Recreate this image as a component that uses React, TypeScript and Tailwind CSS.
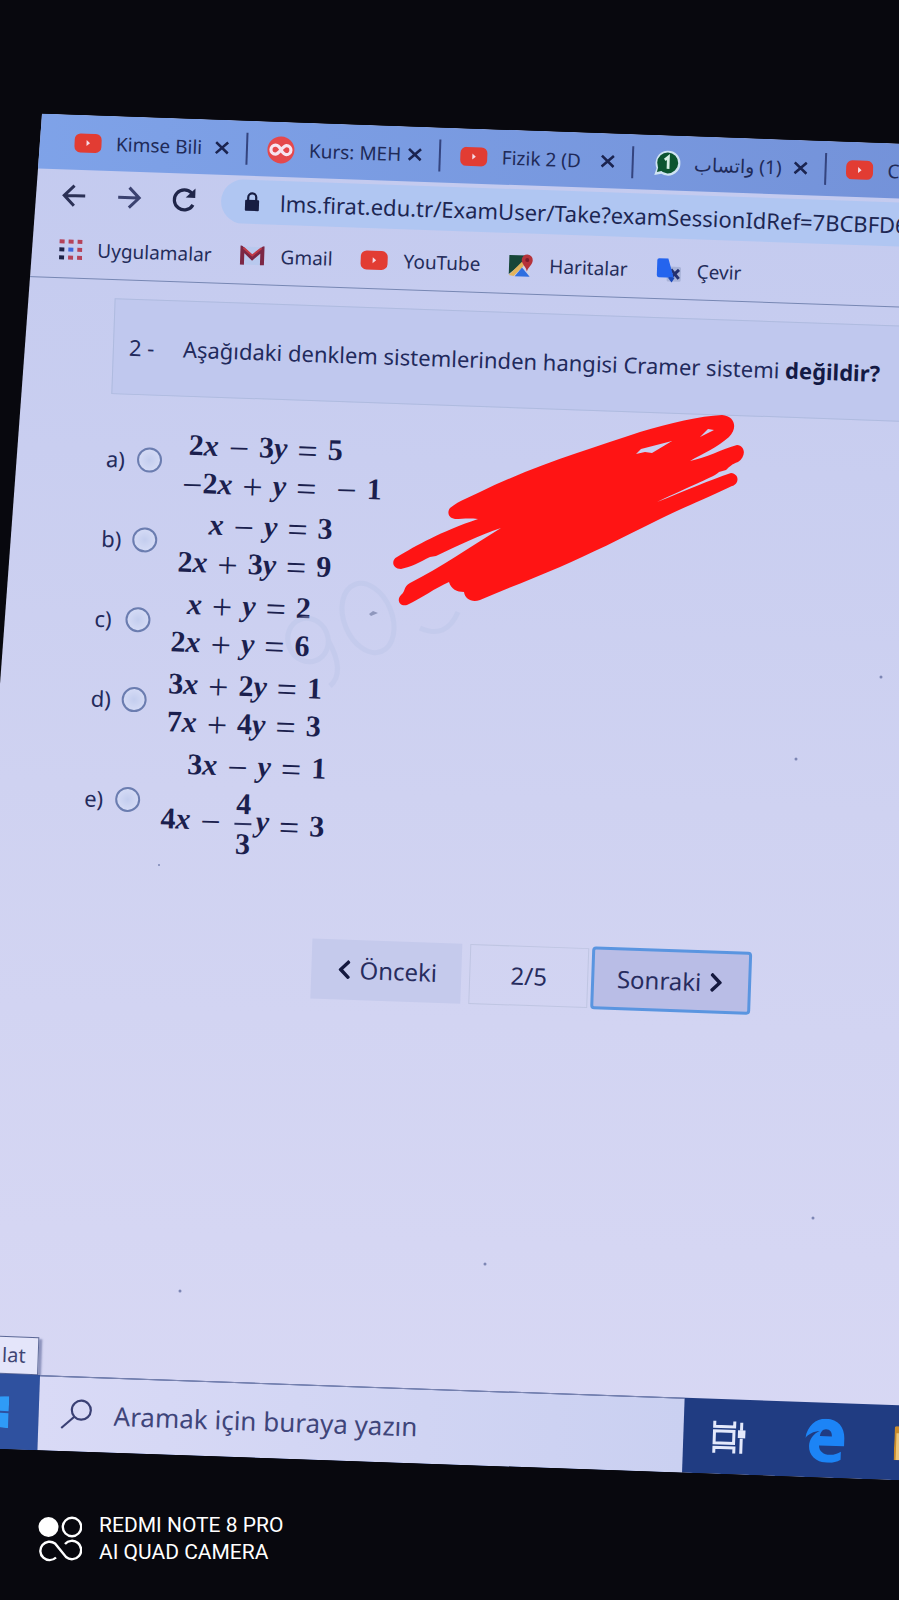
import type { ReactNode } from "react";
import { FaChevronLeft, FaChevronRight } from "react-icons/fa";

function YouTubeIcon() {
  return (
    <svg viewBox="0 0 28 20" className="h-5 w-7 shrink-0" aria-hidden="true">
      <rect x="0.5" y="0.5" width="27" height="19" rx="6" fill="#e23c33" />
      <path d="M12.5 7 L16 10 L12.5 13 Z" fill="#f6dce6" />
    </svg>
  );
}

function CourseIcon() {
  return (
    <svg viewBox="0 0 28 28" className="h-7 w-7 shrink-0" aria-hidden="true">
      <circle cx="14" cy="14" r="13.500" fill="#e5484c" />
      <path
        d="M14 14 C12 10 10.500 9.500 8.500 9.500 A4.500 4.500 0 0 0 8.500 18.500 C12.500 18.500 15.500 9.500 19.500 9.500 A4.500 4.500 0 0 1 19.500 18.500 C17 18.500 16 17 14 14"
        fill="none"
        stroke="#f7e4f0"
        strokeWidth="3.200"
      />
    </svg>
  );
}

function WhatsAppIcon() {
  return (
    <svg viewBox="0 0 28 28" className="h-7 w-7 shrink-0" aria-hidden="true">
      <path d="M2 26 L4 19 A12.500 12.500 0 1 1 9 24.500 Z" fill="#cfe3f2" />
      <circle cx="15" cy="13.500" r="10.500" fill="#0c5530" />
      <path d="M4.500 23 L6 17 L10 21.500 Z" fill="#0c5530" />
      <path d="M12 10.500 L15.500 7.500 V19.500" fill="none" stroke="#d6efe4" strokeWidth="2.800" />
    </svg>
  );
}

function CloseIcon() {
  return (
    <svg viewBox="0 0 14 14" className="h-3.5 w-3.5" aria-hidden="true">
      <path d="M1 1.500 L13 12.500 M13 1.500 L1 12.500" stroke="#1b2450" strokeWidth="2.600" />
    </svg>
  );
}

function AppsIcon() {
  const colors = ["#b5425a", "#b5425a", "#b5425a", "#1d2247", "#3f66dd", "#b5425a", "#1d2247", "#b5425a", "#b5425a"];
  return (
    <svg viewBox="0 0 24 24" className="h-6 w-6" aria-hidden="true">
      {colors.map((c, i) => (
        <rect key={i} x={1 + (i % 3) * 9} y={2 + Math.floor(i / 3) * 8} width="5" height="4" fill={c} />
      ))}
    </svg>
  );
}

function GmailIcon() {
  return (
    <svg viewBox="0 0 26 20" className="h-5 w-[26px]" aria-hidden="true">
      <rect x="1" y="1" width="24" height="18" fill="#b9c9ee" />
      <path d="M3 19 V3 L13 12 L23 3 V19" fill="none" stroke="#7c2745" strokeWidth="4" />
      <path d="M4 2 L13 9.500 L22 2" fill="none" stroke="#c03a48" strokeWidth="2" />
    </svg>
  );
}

function MapsIcon() {
  return (
    <svg viewBox="0 0 26 24" className="h-6 w-[26px]" aria-hidden="true">
      <path d="M1 2 H19 L13 11 L1 21 Z" fill="#174638" />
      <path d="M1 22 L14 8 L17 11 L6 23 Z" fill="#e2b45c" />
      <path d="M7 23 L14 14 L22 23 Z" fill="#2f6fe0" />
      <path d="M16 11 L22 16 V22 L15 14 Z" fill="#cfd4e6" />
      <path d="M19 18 C18 13 13.500 11 13.500 6.500 A5.500 5.500 0 0 1 24.500 6.500 C24.500 11 20.500 13 19 18 Z" fill="#b5323a" />
      <circle cx="19" cy="6.500" r="2" fill="#7c1c2b" />
    </svg>
  );
}

function TranslateIcon() {
  return (
    <svg viewBox="0 0 26 26" className="h-[26px] w-[26px]" aria-hidden="true">
      <rect x="11" y="9" width="14" height="15" rx="1.500" fill="#a9b3d8" />
      <path d="M15 12 L23 21 M23 12 L14 21" stroke="#24306f" strokeWidth="3" />
      <path d="M1 3 Q1 1 3 1 H12 L18 20 H3 Q1 20 1 18 Z" fill="#2464ee" />
      <path d="M12 20 H19 L16 25 Z" fill="#1b48b8" />
    </svg>
  );
}

type Tab = { title: string; icon: ReactNode; rtl?: boolean };

const tabs: Tab[] = [
  { title: "Kimse Bili", icon: <YouTubeIcon /> },
  { title: "Kurs: MEH", icon: <CourseIcon /> },
  { title: "Fizik 2 (D", icon: <YouTubeIcon /> },
  { title: "(1) واتساب", icon: <WhatsAppIcon />, rtl: true },
  { title: "C", icon: <YouTubeIcon /> },
];

function TabStrip() {
  return (
    <div className="flex h-[55px] items-center bg-linear-to-r from-[#7fa3e9] to-[#7391d8] pl-[60px]">
      {tabs.map((tab, i) => (
        <div key={i} className="flex h-8 w-[193px] shrink-0 items-center border-r-2 border-[#34447f] pr-[17px] pl-[19px]">
          {tab.icon}
          <span
            dir={tab.rtl ? "rtl" : "ltr"}
            className="ml-3.5 w-[87px] shrink-0 text-[19px] leading-7 whitespace-nowrap text-[#202a58]"
          >
            {tab.title}
          </span>
          <button type="button" aria-label="Kapat" className="ml-auto">
            <CloseIcon />
          </button>
        </div>
      ))}
    </div>
  );
}

function Toolbar() {
  return (
    <div className="flex h-[52px] items-center pl-[68px]">
      <div className="flex items-center gap-[29px]">
        <button type="button" aria-label="Geri">
          <svg viewBox="0 0 26 26" className="h-[26px] w-[26px]" fill="none" stroke="#2b3156" strokeWidth="3">
            <path d="M24 13 H4 M13 3 L3 13 L13 23" />
          </svg>
        </button>
        <button type="button" aria-label="İleri">
          <svg viewBox="0 0 26 26" className="h-[26px] w-[26px]" fill="none" stroke="#3b4270" strokeWidth="3">
            <path d="M2 13 H22 M13 3 L23 13 L13 23" />
          </svg>
        </button>
        <button type="button" aria-label="Yenile">
          <svg viewBox="0 0 26 26" className="h-[26px] w-[26px]" fill="none" stroke="#20264a" strokeWidth="3.200">
            <path d="M22 18 A10 10 0 1 1 20.500 6.500" />
            <path d="M24 1.500 V11 H14.500 Z" fill="#20264a" stroke="none" />
          </svg>
        </button>
      </div>
      <div className="ml-6 flex h-[44px] flex-1 items-center rounded-l-full bg-[#b0c6f2] pl-[23px]">
        <svg viewBox="0 0 16 20" className="h-5 w-4 shrink-0" aria-hidden="true">
          <rect x="1" y="8" width="14" height="11" rx="1" fill="#171d42" />
          <path d="M4 9 V5.500 A4 4 0 0 1 12 5.500 V9" fill="none" stroke="#171d42" strokeWidth="2.200" />
        </svg>
        <input
          aria-label="Adres çubuğu"
          readOnly
          value="lms.firat.edu.tr/ExamUser/Take?examSessionIdRef=7BCBFD6"
          className="ml-5 min-w-0 flex-1 bg-transparent text-[22px] text-[#1d2653] outline-none"
        />
      </div>
    </div>
  );
}

const bookmarks: { label: string; icon: ReactNode }[] = [
  { label: "Uygulamalar", icon: <AppsIcon /> },
  { label: "Gmail", icon: <GmailIcon /> },
  { label: "YouTube", icon: <YouTubeIcon /> },
  { label: "Haritalar", icon: <MapsIcon /> },
  { label: "Çevir", icon: <TranslateIcon /> },
];

function Bookmarks() {
  return (
    <nav className="flex h-[57px] items-center gap-7 border-b border-[#7787b3] pl-[67px]">
      {bookmarks.map((b) => (
        <a key={b.label} href="#" className="flex items-center gap-[15px] text-[19px] text-[#242c5a]">
          {b.icon}
          {b.label}
        </a>
      ))}
    </nav>
  );
}

function Op({ children }: { children: ReactNode }) {
  return (
    <span className="mx-2.5 inline-block align-[-4px] text-[36px] leading-[30px] font-normal not-italic">{children}</span>
  );
}

function V({ children }: { children: ReactNode }) {
  return <i>{children}</i>;
}

function Fraction({ top, bottom }: { top: string; bottom: string }) {
  return (
    <span className="mx-1 inline-flex flex-col text-center align-middle">
      <span className="border-b-2 border-[#2c3160] px-px leading-[38px]">{top}</span>
      <span className="leading-[38px]">{bottom}</span>
    </span>
  );
}

type Equation = { left: ReactNode; right: ReactNode };
type Option = { id: string; row: string; lines: Equation[] };

const options: Option[] = [
  {
    id: "a",
    row: "pl-[122px] h-[79px]",
    lines: [
      { left: <>2<V>x</V><Op>−</Op>3<V>y</V></>, right: "5" },
      {
        left: (
          <>
            <span className="inline-block align-[-4px] text-[36px] leading-[30px] font-normal">−</span>2<V>x</V>
            <Op>+</Op>
            <V>y</V>
          </>
        ),
        right: <><Op>−</Op>1</>,
      },
    ],
  },
  {
    id: "b",
    row: "pl-[120px] h-[80px]",
    lines: [
      { left: <><V>x</V><Op>−</Op><V>y</V></>, right: "3" },
      { left: <>2<V>x</V><Op>+</Op>3<V>y</V></>, right: "9" },
    ],
  },
  {
    id: "c",
    row: "pl-[116px] h-[80px]",
    lines: [
      { left: <><V>x</V><Op>+</Op><V>y</V></>, right: "2" },
      { left: <>2<V>x</V><Op>+</Op><V>y</V></>, right: "6" },
    ],
  },
  {
    id: "d",
    row: "pl-[115px] h-[80px]",
    lines: [
      { left: <>3<V>x</V><Op>+</Op>2<V>y</V></>, right: "1" },
      { left: <>7<V>x</V><Op>+</Op>4<V>y</V></>, right: "3" },
    ],
  },
  {
    id: "e",
    row: "pl-[112px] h-[120px]",
    lines: [
      { left: <>3<V>x</V><Op>−</Op><V>y</V></>, right: "1" },
      { left: <>4<V>x</V><Op>−</Op><Fraction top="4" bottom="3" /><V>y</V></>, right: "3" },
    ],
  },
];

function OptionRow({ option }: { option: Option }) {
  return (
    <label className={`flex items-center ${option.row}`}>
      <span className="mb-1 w-[31px] text-[22px] text-[#232a5c]">{option.id})</span>
      <input
        type="radio"
        name="answer"
        value={option.id}
        className="mb-1 h-[25px] w-[25px] shrink-0 appearance-none rounded-full border-2 border-[#6b7db0] bg-radial from-[#c3cdee] to-[#dbe0f8]"
      />
      <span className="ml-[21px] grid grid-cols-[auto_auto] items-center font-['Liberation_Serif',serif] text-[30px] leading-[38px] font-bold text-[#1b1f4e]">
        {option.lines.map((line, i) => (
          <span key={i} className="contents">
            <span className="text-right whitespace-nowrap">{line.left}</span>
            <span className="whitespace-nowrap">
              <Op>=</Op>
              {line.right}
            </span>
          </span>
        ))}
      </span>
    </label>
  );
}

function Pager() {
  return (
    <div className="flex items-center pl-[345px] text-[24px] text-[#272c5e]">
      <button type="button" className="flex h-[60px] w-[150px] items-center justify-center gap-1.5 bg-[#c5caec]">
        <FaChevronLeft className="h-[22px] w-[18px] text-[#15193f]" />
        Önceki
      </button>
      <span className="ml-2 flex h-[60px] w-[119px] items-center justify-center border border-[#bfc5e2]">2/5</span>
      <button
        type="button"
        className="ml-[3px] flex h-[63px] w-[160px] items-center justify-center gap-1.5 rounded-sm border-3 border-[#5a95e0] bg-[#b9bde6]"
      >
        Sonraki
        <FaChevronRight className="h-[22px] w-[18px] text-[#15193f]" />
      </button>
    </div>
  );
}

function Taskbar() {
  return (
    <div className="flex h-[75px] bg-[#203c82]">
      <button type="button" aria-label="Başlat" className="flex w-[88px] items-center bg-[#2f519f] pl-[26px]">
        <svg viewBox="0 0 32 32" className="h-8 w-8" fill="#2f9bf7">
          <path d="M0 3 L15 1 V15 H0 Z M17 1 L32 0 V15 H17 Z M0 17 H15 V31 L0 29 Z M17 17 H32 V32 L17 31 Z" />
        </svg>
      </button>
      <label className="flex w-[645px] shrink-0 items-center border-t border-t-[#8089b3] bg-linear-to-r from-[#d9daf6] to-[#cad0f1] pl-[22px]">
        <svg viewBox="0 0 32 32" className="h-8 w-8 shrink-0" fill="none" stroke="#3a4074" strokeWidth="2.200">
          <circle cx="20.500" cy="11.500" r="9.500" />
          <path d="M14 18 L1 30" />
        </svg>
        <input
          type="text"
          aria-label="Arama"
          placeholder="Aramak için buraya yazın"
          className="ml-[21px] min-w-0 flex-1 bg-transparent text-[26px] text-[#3f457a] outline-none placeholder:text-[#3f457a]"
        />
      </label>
      <button type="button" aria-label="Görev görünümü" className="ml-7">
        <svg viewBox="0 0 34 34" className="h-[34px] w-[34px]" fill="none" stroke="#e4e9fb" strokeWidth="3">
          <path d="M3 1 V6.500 H23 V1 M3 33 V27.500 H23 V33 M3 11 H22.500 V23 H3 Z M30 2 V10 M30 18 V33" />
          <rect x="28" y="11" width="5" height="5" fill="#e4e9fb" />
        </svg>
      </button>
      <button type="button" aria-label="Edge" className="ml-[60px]">
        <svg viewBox="0 0 40 44" className="h-11 w-10">
          <path
            d="M0 20 C2 7 10 0 20.500 0 C32 0 39 8 39 19 V27 H14 C14 33 19 36 25 36 C29 36 33 34.500 36 32.500 V40.500 C32 43 28 44 22.500 44 C11 44 4 37 4 28 C4 21 8 15.500 14 12.500 C8 13 3 16 0 20 Z M14.500 17.500 H26.500 C26.500 13 24.500 10.500 20.500 10.500 C17 10.500 15 13.500 14.500 17.500 Z"
            fill="#1c84f6"
            fillRule="evenodd"
          />
        </svg>
      </button>
      <button type="button" aria-label="Dosya Gezgini" className="ml-[49px]">
        <svg viewBox="0 0 40 34" className="h-[34px] w-10">
          <path d="M0 2 Q0 0 2 0 H14 L18 5 H40 V34 H0 Z" fill="#c98b2b" />
          <rect x="2" y="7" width="38" height="27" fill="#edc576" />
        </svg>
      </button>
    </div>
  );
}

function Scribble() {
  return (
    <svg viewBox="380 400 380 220" className="pointer-events-none absolute top-[400px] left-[380px] h-[220px] w-[380px]" aria-hidden="true">
      <path
        fill="#ff1414"
        fillRule="evenodd"
        d="M450 508 C460 500 470 497 480 492 C535 465 590 449 640 432 C670 423 700 416 722 415 C735 416 738 428 729 437 C718 447 702 454 690 461 C706 458 722 449 737 445 C746 446 746 457 738 462 C732 464 729 467 726 470 L719 472 C716 476 690 486 657 502 C685 491 710 480 731 473 C740 474 739 484 732 486 C700 501 680 509 660 519 C620 539 590 554 560 567 C530 580 505 589 480 600 C472 603 465 599 464 592 C457 592 451 589 449 582 C435 588 422 598 407 605 C400 607 396 600 401 595 C406 591 403 587 410 583 C440 568 470 547 501 528 C480 535 455 547 436 556 L430 557 C420 562 411 567 401 569 C392 569 391 560 397 557 C417 545 440 532 478 519 C468 518 462 519 455 519 C448 518 447 512 450 508 Z M636 454 L641 449 L672 441 L652 453 L645 452 Z M700 437 L708 429 L714 430 Z"
      />
    </svg>
  );
}

function ScreenMarks() {
  return (
    <svg viewBox="0 0 899 1600" className="pointer-events-none absolute top-0 left-0 h-[1600px] w-[899px]" aria-hidden="true">
      <g fill="none" stroke="#b7c2e6" strokeWidth="5" opacity="0.35">
        <ellipse cx="368" cy="618" rx="24" ry="36" transform="rotate(-22 368 618)" />
        <ellipse cx="308" cy="640" rx="20" ry="22" transform="rotate(-22 308 640)" />
        <path d="M328 640 Q346 672 330 686" />
        <path d="M420 628 Q446 640 458 612" />
      </g>
      <path d="M369 614 L373 611 L378 613 L371 616 Z" fill="#8f97bd" />
      <g fill="#7d86b4">
        <circle cx="796" cy="759" r="1.500" />
        <circle cx="881" cy="677" r="1.500" />
        <circle cx="813" cy="1218" r="1.500" />
        <circle cx="485" cy="1264" r="1.500" />
        <circle cx="180" cy="1291" r="1.500" />
        <circle cx="159" cy="865" r="1" />
      </g>
    </svg>
  );
}

function CameraStamp() {
  return (
    <footer className="mt-16 flex items-center gap-[17px] pb-9 pl-[38px] text-white">
      <svg viewBox="0 0 44 46" className="h-[46px] w-11" fill="none" stroke="#ffffff" strokeWidth="2.400" aria-hidden="true">
        <circle cx="10.500" cy="11" r="10" fill="#ffffff" stroke="none" />
        <circle cx="34" cy="11" r="9.200" />
        <path d="M18 41.500 A9.200 9.200 0 1 1 17 27.500 L28 41 A9.200 9.200 0 1 0 27 28" />
      </svg>
      <p className="font-[Roboto,sans-serif] text-[21px] leading-[27px]">
        REDMI NOTE 8 PRO
        <br />
        AI QUAD CAMERA
      </p>
    </footer>
  );
}

export default function App() {
  return (
    <div className="relative min-h-screen overflow-hidden bg-[#08080e] font-['Noto_Sans','DejaVu_Sans',sans-serif]">
      <div className="w-[110%] origin-top-left rotate-2 pt-28">
        <div className="flex flex-col bg-linear-to-b from-[#c3caef] via-[#cfd2f1] to-[#d8d8f4] [clip-path:polygon(46px_0,100%_0,100%_100%,0_100%,0_89%)]">
          <header>
            <TabStrip />
            <Toolbar />
            <Bookmarks />
          </header>
          <main>
            <div className="mt-[18px] ml-[125px] flex h-24 items-center border border-[#afbbdf] bg-[#c0c8ee] pl-[15px] text-[22px] text-[#222a5c]">
              <span className="w-[54px]">2 -</span>
              <p className="whitespace-nowrap">
                Aşağıdaki denklem sistemlerinden hangisi Cramer sistemi <b className="text-[#141a45]">değildir?</b>
              </p>
            </div>
            <fieldset className="mt-[27px]">
              {options.map((o) => (
                <OptionRow key={o.id} option={o} />
              ))}
            </fieldset>
            <div className="mt-[69px]">
              <Pager />
            </div>
            <div className="mt-[347px] flex">
              <span className="h-[38px] w-[86px] border border-[#5b6796] bg-[#e4e5fa] pr-3 text-right text-[20px] leading-9 text-[#3f4573] shadow-[3px_2px_2px_#8d93bd]">
                lat
              </span>
            </div>
          </main>
          <Taskbar />
        </div>
      </div>
      <CameraStamp />
      <ScreenMarks />
      <Scribble />
    </div>
  );
}
